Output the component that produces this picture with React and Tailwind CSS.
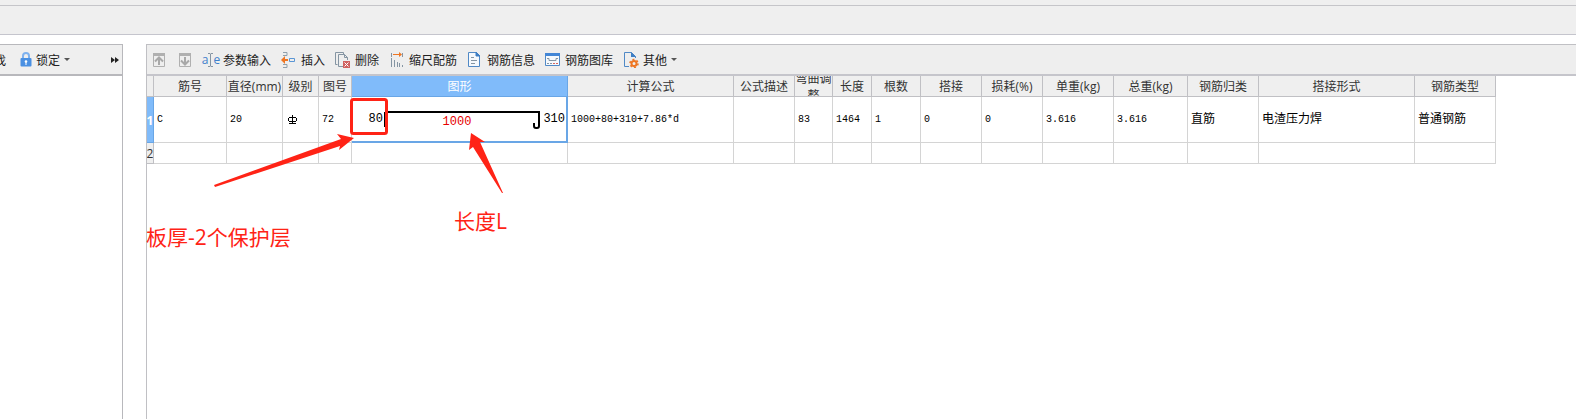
import clsx from "clsx";

const columns = [
  { key: "no", title: "筋号", width: "w-[73px]" },
  { key: "diameter", title: "直径(mm)", width: "w-[56px]" },
  { key: "grade", title: "级别", width: "w-[36px]" },
  { key: "figureNo", title: "图号", width: "w-[33px]" },
  { key: "shape", title: "图形", width: "w-[216px]" },
  { key: "formula", title: "计算公式", width: "w-[166px]" },
  { key: "formulaDesc", title: "公式描述", width: "w-[61px]" },
  { key: "bend", title: "弯曲调整", width: "w-[38px]" },
  { key: "length", title: "长度", width: "w-[39px]" },
  { key: "count", title: "根数", width: "w-[49px]" },
  { key: "lap", title: "搭接", width: "w-[61px]" },
  { key: "loss", title: "损耗(%)", width: "w-[61px]" },
  { key: "unitWeight", title: "单重(kg)", width: "w-[71px]" },
  { key: "totalWeight", title: "总重(kg)", width: "w-[74px]" },
  { key: "category", title: "钢筋归类", width: "w-[71px]" },
  { key: "lapForm", title: "搭接形式", width: "w-[156px]" },
  { key: "type", title: "钢筋类型", width: "w-[81px]" },
]

const bar = {
  no: "C",
  diameter: "20",
  figureNo: "72",
  formula: "1000+80+310+7.86*d",
  bend: "83",
  length: "1464",
  count: "1",
  lap: "0",
  loss: "0",
  unitWeight: "3.616",
  totalWeight: "3.616",
  category: "直筋",
  lapForm: "电渣压力焊",
  type: "普通钢筋",
}

const Icon = ({ children }) => (
  <svg viewBox="0 0 16 16" width="16" height="16" fill="none" className="shrink-0" aria-hidden="true">
    {children}
  </svg>
)

const UpIcon = () => (
  <Icon>
    <path d="M2.500 1.500h11v13h-11z" stroke="#b0b0b0" />
    <path d="M2 2.500h12" stroke="#b0b0b0" strokeWidth="3" />
    <path d="M8 13V6M4 9.500 8 5.500 12 9.500" stroke="#a8a8a8" strokeWidth="2" />
  </Icon>
)

const DownIcon = () => (
  <Icon>
    <path d="M2.500 1.500h11v13h-11z" stroke="#b0b0b0" />
    <path d="M2 2.500h12" stroke="#b0b0b0" strokeWidth="3" />
    <path d="M8 5v7M4 8.500 8 12.500 12 8.500" stroke="#a8a8a8" strokeWidth="2" />
  </Icon>
)

const InsertIcon = () => (
  <Icon>
    <path d="M2 .5h4v3H2M2 12.500h4v3H2" stroke="#8ea0ad" />
    <path d="M2 8h5" stroke="#ee7623" strokeWidth="2" />
    <path d="M0 8l4-4v8z" fill="#ee7623" />
    <path d="M8.500 6.500h5v3h-5z" stroke="#5b96d5" />
  </Icon>
)

const DeleteIcon = () => (
  <Icon>
    <path d="M2.500 12.500h-2v-12h8v2" stroke="#8595a3" />
    <path d="M8 14.500H3.500v-12h6l3 3V8M9.500 2.500v3h3" stroke="#8595a3" />
    <path d="M8 9h7v7H8z" fill="#d0605e" />
    <path d="m9.500 10.500 4 4m0-4-4 4" stroke="#fff" />
  </Icon>
)

const ScaleIcon = () => (
  <Icon>
    <path d="M2.500 1v4M13.500 1v4" stroke="#8595a3" />
    <path d="M4 2.500h7" stroke="#ee7623" />
    <path d="m10 0 3 2.500L10 5z" fill="#ee7623" />
    <path d="M2.500 6v9M5.500 8v7M8.500 10v5M10.500 11v4M13.500 13v2" stroke="#8595a3" />
  </Icon>
)

const InfoIcon = () => (
  <Icon>
    <path d="M1.500 .5h8l3 3v11h-11z" fill="#f5f9fd" stroke="#5089c6" />
    <path d="M9 0v4h4z" fill="#3f7fc4" stroke="#3f7fc4" />
    <path d="M4 5.500h3M4 8.500h6M4 11.500h4" stroke="#8595a3" />
  </Icon>
)

const GalleryIcon = () => (
  <Icon>
    <path d="M.5 1.500h14v12H.5z" fill="#f5f9fd" stroke="#5089c6" />
    <path d="M0 1h15v3H0z" fill="#4286d6" />
    <path d="M2 6.500h2v2h7v-2h2" stroke="#8595a3" />
    <path d="M2 11.500h2m1 0h2" stroke="#8595a3" />
    <path d="M8 11.500h2m1 0h2" stroke="#d8655d" />
  </Icon>
)

const OtherIcon = () => (
  <Icon>
    <path d="M6 14.500H1.500V.5h7l4 4V6" stroke="#5089c6" />
    <path d="M8 0v5h5z" fill="#3f7fc4" />
    <circle cx="11" cy="11.500" r="2.500" stroke="#ee7623" strokeWidth="2" />
    <circle cx="11" cy="11.500" r="4" stroke="#ee7623" strokeWidth="1.500" strokeDasharray="2 2.200" />
  </Icon>
)

const LockIcon = () => (
  <svg viewBox="0 0 12 15" width="12" height="15" fill="none" className="shrink-0" aria-hidden="true">
    <path d="M3 7V4a3 3 0 0 1 6 0v3" stroke="#7fb2ee" strokeWidth="2" />
    <rect x="0.500" y="6" width="11" height="8.500" rx="1" fill="#4a90e2" />
    <circle cx="6" cy="9.500" r="1.300" fill="#fff" />
    <path d="M6 10v3" stroke="#fff" />
  </svg>
)

const EditIcon = () => (
  <span className="flex w-4 items-center justify-center text-xs leading-4 text-[#3f80cc]" aria-hidden="true">
    a
    <svg viewBox="0 0 5 14" width="5" height="14" fill="none" className="shrink-0">
      <path d="M0 .5h2l.5 1 .5-1h2M0 13.500h2l.5-1 .5 1h2M2.500 1v12" stroke="#8595a3" />
    </svg>
    e
  </span>
)

const Caret = () => (
  <svg viewBox="0 0 6 3" width="6" height="3" className="shrink-0" aria-hidden="true">
    <path d="M0 0h6L3 3z" fill="#555" />
  </svg>
)

const ToolButton = ({ icon, label, caret, className }) => (
  <button type="button" className={clsx("flex shrink-0 items-center gap-1 whitespace-nowrap", className)}>
    {icon}
    <span className="pt-0.5">{label}</span>
    {caret && <Caret />}
  </button>
)

const GradeSymbol = () => (
  <svg viewBox="0 0 9 10" width="9" height="10" fill="none" className="ml-0.5 mt-1" role="img" aria-label="HRB400">
    <path d="M4.500 0v9M1 2.500h7M1 6.500h7M.5 3v3M8.500 3v3M1 8.500h7" stroke="#000" />
  </svg>
)

// bar outline with the hook, 80 / 1000 / 310 are the segment lengths
const BarShape = () => (
  <div className="flex h-full text-xs leading-4">
    <span className="w-8 pr-px pt-3.5 text-right">80</span>
    <div className="relative w-[156px] text-center text-[#e60000]">
      <svg viewBox="0 0 156 44" width="156" height="44" fill="none" className="absolute left-0 top-0" aria-hidden="true">
        <path d="M.5 30V15" stroke="#000" />
        <path d="M1 15h154v14q0 2-2 2h-1q-2 0-2-2v-3" stroke="#000" strokeWidth="2" />
      </svg>
      <span className="block pr-2.5 pt-[17px]">1000</span>
    </div>
    <span className="flex-1 pr-px pt-3.5 text-right">310</span>
  </div>
)

const GridTable = () => (
  <table className="w-[1349px] table-fixed border-separate border-spacing-0 text-xs">
    <colgroup>
      <col className="w-[7px]" />
      {columns.map((c) => <col key={c.key} className={c.width} />)}
    </colgroup>
    <thead>
      <tr>
        <td className="h-[21px] border-b border-r border-[#c0c0c4] bg-[#efefef] p-0" />
        {columns.map((c) => (
          <th key={c.key} scope="col"
            className={clsx("border-b border-r p-0 font-normal",
              c.key === "shape" ? "border-[#69a6e6] bg-[#80bbfa] text-white" : "border-[#c0c0c4] bg-[#efefef] text-[#333]")}>
            <div className={clsx("flex h-5 items-center justify-center overflow-hidden pt-px",
              c.key === "bend" ? "whitespace-normal leading-[17px]" : "whitespace-nowrap leading-[15px]")}>
              {c.title}
            </div>
          </th>
        ))}
      </tr>
    </thead>
    <tbody>
      <tr>
        <th scope="row" className="border-b border-r border-[#69a6e6] bg-[#80bbfa] p-0 text-white">
          <div className="flex h-[45px] items-center justify-center overflow-hidden pt-0.5">1</div>
        </th>
        {columns.map((c) => (
          <td key={c.key}
            className={clsx("p-0 align-top font-['Liberation_Mono','Noto_Sans_CJK_SC',monospace] text-black",
              c.key === "shape" ? "border-b-2 border-r-2 border-[#69a6e6]" : "border-b border-r border-[#d4d4d4]")}>
            {c.key === "shape" && <div className="h-[44px]"><BarShape /></div>}
            {c.key !== "shape" && (
              <div className={clsx("whitespace-nowrap pl-[3px] pt-3.5 leading-[18px]",
                ["category", "lapForm", "type"].includes(c.key) ? "text-xs" : "text-[10px]")}>
                {c.key === "grade" ? <GradeSymbol /> : bar[c.key]}
              </div>
            )}
          </td>
        ))}
      </tr>
      <tr>
        <th scope="row" className="border-b border-r border-[#c0c0c4] bg-[#efefef] p-0 font-normal text-[#333]">
          <div className="flex h-5 items-center justify-center overflow-hidden pt-0.5">2</div>
        </th>
        {columns.map((c) => <td key={c.key} className="border-b border-r border-[#d4d4d4] p-0" />)}
      </tr>
    </tbody>
  </table>
)

// red marks laid over the grid
const Annotations = () => (
  <div className="pointer-events-none absolute left-0 top-0 text-[#ff2316]">
    <svg viewBox="0 0 400 200" width="400" height="200" className="absolute left-0 top-0" aria-hidden="true">
      <rect x="204.500" y="54.500" width="35" height="34" rx="2" fill="none" stroke="#ff2316" strokeWidth="3" />
      <path d="M67 140 194 94 190 89 207 93 192 105 193 101 68 142z" fill="#ff2316" />
      <path d="M324 88 338 97 333 97 356 148 355 148 326 102 322 105z" fill="#ff2316" />
    </svg>
    <p className="absolute -left-px top-[176px] whitespace-nowrap text-[21px] leading-8">板厚-2个保护层</p>
    <p className="absolute left-[307px] top-[160px] whitespace-nowrap text-[21px] leading-8">长度L</p>
  </div>
)

export default function App() {
  return (
    <div className="flex h-screen flex-col overflow-hidden bg-white font-['Open_Sans','Noto_Sans_CJK_SC',sans-serif] text-xs text-[#222]">
      <div className="h-1.5 shrink-0 border-b border-[#c5c5c9] bg-[#efefef]" />
      <div className="h-[29px] shrink-0 border-b border-[#c5c5cd] bg-[#efefef]" />

      <main className="mt-[9px] flex min-h-0 flex-1 gap-[23px]">
        <aside className="flex w-[123px] shrink-0 flex-col border-r border-t border-[#b8b8bc]">
          <div className="flex h-[31px] shrink-0 items-center overflow-hidden border-b-2 border-[#b8b8bc] bg-[#efefef]">
            <button type="button" className="-ml-[18px] mr-3.5 shrink-0 pt-0.5">查找</button>
            <ToolButton icon={<LockIcon />} label="锁定" caret />
            <button type="button" aria-label="更多" className="ml-auto mr-[3px]">
              <svg viewBox="0 0 8 6" width="8" height="6" aria-hidden="true">
                <path d="M0 0l4 3-4 3zM4 0l4 3-4 3z" fill="#222" />
              </svg>
            </button>
          </div>
        </aside>

        <section className="relative min-w-0 flex-1 border-l border-t border-[#c0c0c4]">
          <div className="flex h-[31px] items-center border-b-2 border-[#c5c5cb] bg-[#eee]">
            <button type="button" aria-label="上移" className="ml-1"><UpIcon /></button>
            <button type="button" aria-label="下移" className="ml-2.5"><DownIcon /></button>
            <ToolButton icon={<EditIcon />} label="参数输入" className="ml-2.5" />
            <ToolButton icon={<InsertIcon />} label="插入" className="ml-2.5" />
            <ToolButton icon={<DeleteIcon />} label="删除" className="ml-2.5" />
            <ToolButton icon={<ScaleIcon />} label="缩尺配筋" className="ml-2.5" />
            <ToolButton icon={<InfoIcon />} label="钢筋信息" className="ml-2.5" />
            <ToolButton icon={<GalleryIcon />} label="钢筋图库" className="ml-2.5" />
            <ToolButton icon={<OtherIcon />} label="其他" caret className="ml-2.5" />
          </div>
          <GridTable />
          <Annotations />
        </section>
      </main>
    </div>
  )
}
